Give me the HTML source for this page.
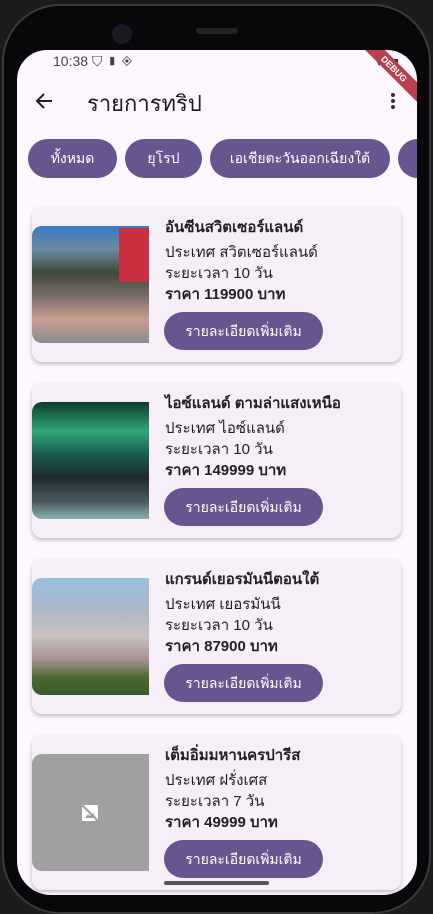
<!DOCTYPE html>
<html><head><meta charset="utf-8"><style>
*{margin:0;padding:0;box-sizing:border-box}
body{width:433px;height:908px;background:#1b1b1d;overflow:hidden;font-family:"Liberation Sans","Noto Sans CJK SC",sans-serif;position:relative}
.phone{position:absolute;left:2px;top:4px;width:429px;height:910px;border-radius:58px;background:#08080a;border:2px solid #3a3a3c}
.screen{position:absolute;left:17px;top:50px;width:400px;height:845px;background:#fdf7ff;border-radius:30px 30px 34px 34px;overflow:hidden}
.sb{position:absolute;top:3px;left:36px;font-size:14px;color:#444}
.chip{position:absolute;top:89px;height:39px;border-radius:20px;background:#68548e;color:#fff;font-size:14px;line-height:39px;text-align:center}
.card{position:absolute;left:15px;width:369px;height:155px;background:#f6eff8;border-radius:10px;box-shadow:0 2px 4px rgba(0,0,0,.25)}
.img{position:absolute;left:0;top:19px;width:117px;height:117px;border-radius:10px 0 0 10px}
.t{position:absolute;left:133px;font-size:15px;color:#222}
.btn{position:absolute;left:132px;top:105px;width:159px;height:38px;border-radius:19px;background:#68548e;color:#fff;font-size:14px;line-height:38px;text-align:center}
</style></head><body>
<div class="phone"></div>
<div style="position:absolute;left:112px;top:24px;width:20px;height:20px;border-radius:50%;background:#1a1a22"></div>
<div style="position:absolute;left:196px;top:28px;width:42px;height:6px;border-radius:3px;background:#222"></div>
<div class="screen">
<div class="sb">10:38 ⛉ ▮ ◈</div>
<div style="position:absolute;right:18px;top:6px;font-size:11px;color:#333">▼◺▮</div>
<div style="position:absolute;right:-22px;top:12px;width:90px;height:14px;background:#b9404a;color:#fff;font-size:9px;font-weight:bold;text-align:center;line-height:14px;transform:rotate(45deg)">DEBUG</div>
<svg style="position:absolute;left:18px;top:42px" width="18" height="18" viewBox="0 0 18 18"><path d="M17 9H2M9 2L2 9l7 7" stroke="#222" stroke-width="2" fill="none"/></svg>
<div style="position:absolute;left:70px;top:36px;font-size:22px;color:#1d1b20">รายการทริป</div>
<div style="position:absolute;left:374px;top:43px;width:4px;height:4px;border-radius:2px;background:#333;box-shadow:0 6px 0 #333,0 12px 0 #333"></div>
<div class="chip" style="left:11px;width:89px">ทั้งหมด</div>
<div class="chip" style="left:108px;width:77px">ยุโรป</div>
<div class="chip" style="left:193px;width:180px">เอเชียตะวันออกเฉียงใต้</div>
<div class="chip" style="left:381px;width:60px"></div>

<div class="card" style="top:157px">
<div class="img" style="background:linear-gradient(180deg,#3a78c8 0%,#6b8aa0 20%,#3e4a3a 40%,#7a6a6a 60%,#c8a090 80%,#8a8a90 100%)"><div style="position:absolute;right:0;top:2px;width:30px;height:54px;background:#c83040"></div></div>
<div class="t" style="top:8px;font-weight:bold">อันซีนสวิตเซอร์แลนด์</div>
<div class="t" style="top:33px">ประเทศ สวิตเซอร์แลนด์</div>
<div class="t" style="top:54px">ระยะเวลา 10 วัน</div>
<div class="t" style="top:75px;font-weight:bold">ราคา 119900 บาท</div>
<div class="btn">รายละเอียดเพิ่มเติม</div></div>

<div class="card" style="top:333px">
<div class="img" style="background:linear-gradient(180deg,#0e3a30 0%,#2fa878 25%,#1a5a50 45%,#1e2a30 65%,#4a5a60 85%,#8ab0b0 100%)"></div>
<div class="t" style="top:8px;font-weight:bold">ไอซ์แลนด์ ตามล่าแสงเหนือ</div>
<div class="t" style="top:33px">ประเทศ ไอซ์แลนด์</div>
<div class="t" style="top:54px">ระยะเวลา 10 วัน</div>
<div class="t" style="top:75px;font-weight:bold">ราคา 149999 บาท</div>
<div class="btn">รายละเอียดเพิ่มเติม</div></div>

<div class="card" style="top:509px">
<div class="img" style="background:linear-gradient(180deg,#9ac0e0 0%,#a8b8c8 25%,#c8c0c0 50%,#a89090 70%,#4a6a30 85%,#3a5a28 100%)"></div>
<div class="t" style="top:8px;font-weight:bold">แกรนด์เยอรมันนีตอนใต้</div>
<div class="t" style="top:33px">ประเทศ เยอรมันนี</div>
<div class="t" style="top:54px">ระยะเวลา 10 วัน</div>
<div class="t" style="top:75px;font-weight:bold">ราคา 87900 บาท</div>
<div class="btn">รายละเอียดเพิ่มเติม</div></div>

<div class="card" style="top:685px">
<div class="img" style="background:#a0a0a0"><svg style="position:absolute;left:48px;top:49px" width="20" height="20" viewBox="0 0 20 20"><rect x="2" y="2" width="16" height="16" fill="#fff"/><path d="M5 15l3-4 2 2 3-3 3 5z" fill="#a0a0a0"/><path d="M1 1l18 18" stroke="#a0a0a0" stroke-width="2"/></svg></div>
<div class="t" style="top:8px;font-weight:bold">เต็มอิ่มมหานครปารีส</div>
<div class="t" style="top:33px">ประเทศ ฝรั่งเศส</div>
<div class="t" style="top:54px">ระยะเวลา 7 วัน</div>
<div class="t" style="top:75px;font-weight:bold">ราคา 49999 บาท</div>
<div class="btn">รายละเอียดเพิ่มเติม</div></div>
<div style="position:absolute;left:147px;top:831px;width:105px;height:4px;border-radius:2px;background:#555"></div>
</div>
</body></html>
